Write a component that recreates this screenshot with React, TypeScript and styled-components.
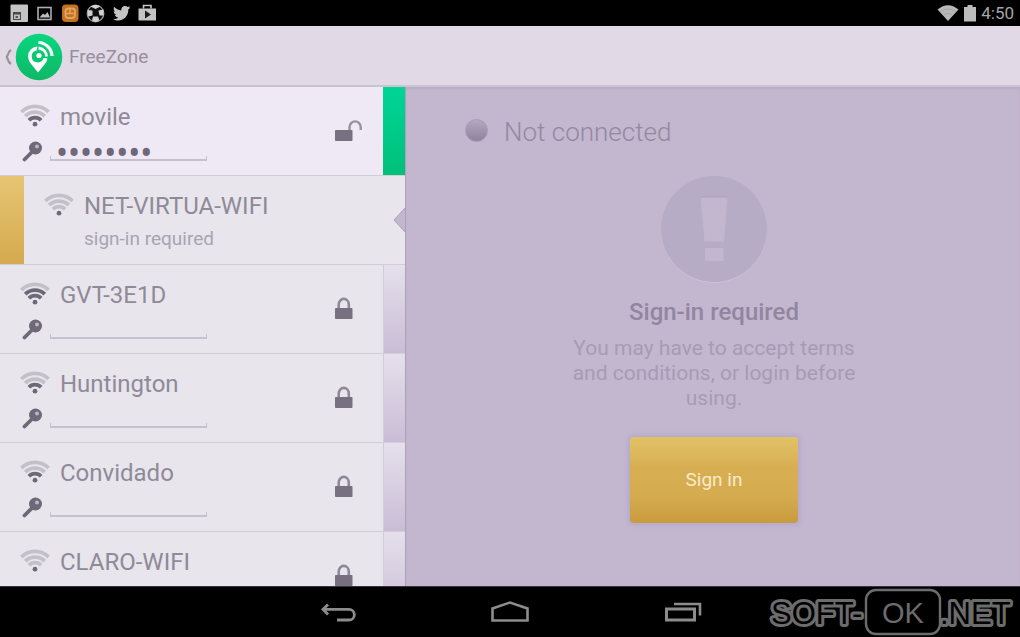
import React from "react";
import styled, { createGlobalStyle } from "styled-components";

const GlobalStyle = createGlobalStyle`
  * { box-sizing: border-box; }
  body {
    margin: 0;
    background: #000;
    font-family: Roboto, "Liberation Sans", sans-serif;
  }
  button { font-family: inherit; padding: 0; border: 0; background: none; cursor: pointer; }
  svg { display: block; flex: none; }
`;

const Screen = styled.div`
  display: flex;
  flex-direction: column;
  height: 100vh;
  overflow: hidden;
`;

const StatusBar = styled.header`
  flex: none;
  display: flex;
  align-items: center;
  justify-content: space-between;
  height: 26px;
  padding: 0 6px 0 8px;
  background: #000;
`;

const StatusGroup = styled.div`
  display: flex;
  align-items: center;
  gap: 5px;
`;

const Clock = styled.time`
  color: #a6a6a6;
  font-size: 17px;
  line-height: 26px;
`;

const AppBar = styled.div`
  flex: none;
  display: flex;
  align-items: center;
  height: 61px;
  padding: 2px 0 0 4px;
  background: #e1d9e6;
  border-bottom: 2px solid #cbc3d1;
`;

const UpButton = styled.button`
  display: flex;
  align-items: center;
  gap: 3px;
`;

const Title = styled.h1`
  margin: 0 0 0 6px;
  color: #96909c;
  font-size: 19px;
  font-weight: 400;
  line-height: 24px;
`;

const Main = styled.main`
  flex: 1;
  min-height: 0;
  display: flex;
  background: #c3b6cf;
`;

const NetworkList = styled.ul`
  flex: 0 0 406px;
  margin: 0;
  padding: 0;
  list-style: none;
  overflow: hidden;
  background: #e8e5ed;
  border-right: 1px solid #aca1b8;
`;

const Row = styled.li<{ $active?: boolean }>`
  position: relative;
  display: flex;
  height: 89px;
  background: ${(p) => (p.$active ? "#efe9f5" : "#e8e5ed")};
  border-bottom: 1px solid #d3cdda;
`;

const stripFill = {
  green: "linear-gradient(#00d596, #00c07a)",
  amber: "linear-gradient(#e6c572, #d5aa50)",
  lilac: "linear-gradient(#e5e0ec, #cabcd6)",
};

const Strip = styled.div<{ $tone: keyof typeof stripFill }>`
  flex: none;
  width: ${(p) => (p.$tone === "amber" ? 24 : 22)}px;
  background: ${(p) => stripFill[p.$tone]};
  border-left: ${(p) => (p.$tone === "lilac" ? "1px solid #d3cdda" : "0")};
`;

const RowBody = styled.div`
  flex: 1;
  min-width: 0;
  display: flex;
  flex-direction: column;
  gap: 7px;
  padding: 16px 0 0 20px;
`;

const NameLine = styled.div`
  display: flex;
  align-items: flex-start;
  gap: 10px;
  height: 28px;
`;

const NetworkName = styled.span`
  color: #8f8a97;
  font-size: 24px;
  line-height: 28px;
`;

const KeyLabel = styled.label`
  display: flex;
  align-items: center;
  gap: 6px;
  height: 26px;
  padding-left: 2px;
`;

const KeyInput = styled.input`
  width: 157px;
  height: 20px;
  padding: 0 6px;
  border: 0;
  outline: 0;
  color: #6f6879;
  background:
    linear-gradient(#c6c1cd, #c6c1cd) left bottom / 1px 5px no-repeat,
    linear-gradient(#c6c1cd, #c6c1cd) right bottom / 1px 5px no-repeat,
    linear-gradient(#c6c1cd, #c6c1cd) left bottom / 100% 2px no-repeat;
  font-family: "Noto Sans", sans-serif;
  font-size: 32px;
  line-height: 20px;
`;

const Note = styled.span`
  padding-left: 40px;
  color: #a9a4b0;
  font-size: 19px;
  line-height: 24px;
`;

const LockSlot = styled.div`
  flex: none;
  display: flex;
  width: 49px;
  padding-top: 32px;
`;

const Notch = styled.svg`
  position: absolute;
  right: -1px;
  top: 31px;
`;

const Detail = styled.section`
  flex: 1;
  min-width: 0;
  display: flex;
  flex-direction: column;
  align-items: center;
  padding: 28px 0 0 2px;
  box-shadow: inset 0 3px 3px -1px #b8abc5;
`;

const Connection = styled.div`
  align-self: stretch;
  display: flex;
  align-items: center;
  gap: 16px;
  padding-left: 57px;
  color: #93889f;
  font-size: 26px;
  font-weight: 300;
  line-height: 34px;
`;

const Dot = styled.span`
  width: 23px;
  height: 23px;
  margin-top: -4px;
  border-radius: 50%;
  background: linear-gradient(#b3a8c2, #8e829d);
  border: 1px solid #a89db5;
`;

const Alert = styled.div`
  margin-top: 26px;
`;

const Heading = styled.h2`
  margin: 14px 0 0;
  color: #9086a0;
  font-size: 24px;
  font-weight: 500;
  line-height: 30px;
`;

const Message = styled.p`
  width: 300px;
  margin: 9px 0 0;
  color: #a79bb3;
  font-size: 21px;
  line-height: 25px;
  text-align: center;
`;

const SignIn = styled.button`
  width: 168px;
  height: 86px;
  margin-top: 26px;
  border-radius: 4px;
  color: #f7ebcb;
  background: linear-gradient(#e2c267, #d7af52 35%, #d5ab50 70%, #c99a3e);
  box-shadow: 0 0 4px 2px #b3a8cb;
  font-size: 19px;
  line-height: 24px;
`;

const NavBar = styled.nav`
  position: relative;
  flex: none;
  display: flex;
  align-items: center;
  justify-content: center;
  gap: 134px;
  height: 51px;
  background: #000;
  border-top: 1px solid #37333b;
`;

const NavButton = styled.button`
  display: block;
`;

const Watermark = styled.svg`
  position: absolute;
  right: 6px;
  bottom: 0;
  font-family: "Liberation Sans", Arial, sans-serif;
`;

function WifiIcon({ level }: { level: number }) {
  const arcs = [
    "M8.9 16.2 A8.5 8.5 0 0 1 21.1 16.2",
    "M5.2 12.2 A14 14 0 0 1 24.8 12.2",
    "M1.4 8 A19.5 19.5 0 0 1 28.6 8",
  ];
  return (
    <svg width="30" height="24" viewBox="0 -1 30 24" aria-hidden="true">
      {arcs.map((d, i) => (
        <path key={d} d={d} fill="none" strokeWidth="3.8" stroke={i < level ? "#6f6879" : "#c4c0c9"} />
      ))}
      <circle cx="15" cy="20.2" r="2.4" fill="#6f6879" />
    </svg>
  );
}

function KeyIcon() {
  return (
    <svg width="22" height="22" viewBox="0 0 22 22" aria-hidden="true">
      <path d="M2.5 19.5 L12 10" stroke="#6f6879" strokeWidth="3.8" strokeLinecap="round" />
      <circle cx="13.5" cy="8" r="6.5" fill="#6f6879" />
      <circle cx="15" cy="6.4" r="2" fill="#bbb5c4" />
    </svg>
  );
}

function LockIcon({ open }: { open?: boolean }) {
  return (
    <svg width="28" height="24" viewBox="0 0 28 24" aria-hidden="true">
      {open ? (
        <path d="M15.5 11 V8 A5.6 5.6 0 0 1 26.7 8 V11" fill="none" stroke="#98929f" strokeWidth="2.4" />
      ) : (
        <path d="M4.7 12 V7.5 A5.05 5.6 0 0 1 14.8 7.5 V12" fill="none" stroke="#8f8997" strokeWidth="2.6" />
      )}
      <rect x="1" y="11" width="17.5" height="11" rx="0.8" fill="#777080" />
    </svg>
  );
}

type Network = { name: string; level: number; secret?: string; open?: boolean; note?: string };

const networks: Network[] = [
  { name: "movile", level: 1, secret: "password", open: true },
  { name: "NET-VIRTUA-WIFI", level: 0, note: "sign-in required" },
  { name: "GVT-3E1D", level: 2 },
  { name: "Huntington", level: 1 },
  { name: "Convidado", level: 1 },
  { name: "CLARO-WIFI", level: 0 },
];

function NetworkRow({ network }: { network: Network }) {
  const { name, level, secret, open, note } = network;
  return (
    <Row $active={open}>
      {note && <Strip $tone="amber" />}
      <RowBody>
        <NameLine>
          <WifiIcon level={level} />
          <NetworkName>{name}</NetworkName>
        </NameLine>
        {note ? (
          <Note>{note}</Note>
        ) : (
          <KeyLabel>
            <KeyIcon />
            <KeyInput type="password" aria-label={`Password for ${name}`} defaultValue={secret ?? ""} />
          </KeyLabel>
        )}
      </RowBody>
      {note ? (
        <Notch width="13" height="26" viewBox="0 0 13 26" aria-hidden="true">
          <path d="M13 0 L1 13 L13 26 Z" fill="#c3b6cf" />
          <path d="M12.5 0.5 L1 13 L12.5 25.5" fill="none" stroke="#aca1b8" />
        </Notch>
      ) : (
        <>
          <LockSlot>
            <LockIcon open={open} />
          </LockSlot>
          <Strip $tone={open ? "green" : "lilac"} />
        </>
      )}
    </Row>
  );
}

function NotificationIcons() {
  return (
    <svg width="150" height="22" viewBox="8 2 150 22" role="img" aria-label="Notifications">
      <rect x="10.5" y="4.5" width="17.5" height="17.5" rx="1" fill="#c4c4c4" />
      <path d="M13 12 H21 V20 H13 Z" fill="#4a4a4a" />
      <path d="M14 14.5 H20 V19 H14 Z" fill="#bdbdbd" />
      <path d="M15.5 16 H18 V18 H15.5 Z" fill="#555" />
      <rect x="38" y="7.5" width="13" height="12" fill="none" stroke="#adadad" strokeWidth="1.6" />
      <path d="M39.5 17.5 L43 13.5 L45 15 L47.5 12 L50 17.5 Z" fill="#bdbdbd" />
      <rect x="62" y="4.5" width="16.5" height="17.5" rx="4" fill="#c4701c" />
      <rect x="65.5" y="8.5" width="9.5" height="9.5" rx="3" fill="none" stroke="#dfa468" strokeWidth="1.8" />
      <path d="M66 13.5 H74 M70 9 V13" stroke="#dfa468" strokeWidth="1.6" fill="none" />
      <circle cx="95.5" cy="13.5" r="8.3" fill="#101010" stroke="#9a9a9a" strokeWidth="1.3" />
      <path d="M90.5 6.5 L95.5 9 L100.5 6.5 L97 5 H94 Z M98.5 10.5 L103.5 9.5 L103.5 15.5 L99.5 15.5 Z M87.5 10 L92.5 10.5 L92.5 15.5 L88 16.5 Z M93 16.5 L98 16.5 L99.5 20.5 L95.5 22 L92 20.5 Z" fill="#d0d0d0" />
      <path d="M130.5 7.5 l-2.2 2.1 c.2 6-4 10.9-9.9 10.9 -2 0-3.7-.5-5.2-1.5 2 .1 3.7-.4 5-1.5 -1.7-.1-2.8-1.1-3.3-2.5 h1.5 c-1.7-.6-2.7-1.9-2.7-3.7 l1.5.4 c-1.5-1.3-1.9-3.2-1-5 1.9 2.2 4.2 3.5 7.2 3.7 -.5-2.5 1.3-4.5 3.6-4.5 1.1 0 2 .4 2.7 1.2 l2.3-.9 -1 1.8 z" fill="#c4c4c4" />
      <path d="M138.5 8.5 H156 V20.5 H138.5 Z" fill="#c4c4c4" />
      <path d="M143.5 8.5 V5.5 H151 V8.5" fill="none" stroke="#c4c4c4" strokeWidth="1.6" />
      <path d="M145 10.5 L151 14.5 L145 18.5 Z" fill="#1c1c1c" />
    </svg>
  );
}

export default function App() {
  return (
    <>
      <GlobalStyle />
      <Screen>
        <StatusBar>
          <StatusGroup>
            <NotificationIcons />
          </StatusGroup>
          <StatusGroup>
            <svg width="22" height="18" viewBox="0 0 22 18" aria-hidden="true">
              <path d="M0.5 5.5 Q11 -3 21.5 5.5 L11 17 Z" fill="#b8b8b8" />
              <path d="M3 8 Q11 2 19 8 M6 11.5 Q11 7.5 16 11.5" fill="none" stroke="#a4a4a4" />
            </svg>
            <svg width="12" height="18" viewBox="0 0 12 18" aria-hidden="true">
              <path d="M3.5 1 H8.5 V3 H12 V17.5 H0 V3 H3.5 Z" fill="#bcbcbc" />
            </svg>
            <Clock>4:50</Clock>
          </StatusGroup>
        </StatusBar>

        <AppBar>
          <UpButton aria-label="Navigate up">
            <svg width="8" height="18" viewBox="0 0 8 18" aria-hidden="true">
              <path d="M7 2 Q4.5 3.500 3.500 7.500 L2.800 9 L3.500 10.500 Q4.500 14.500 7 16" fill="none" stroke="#97919d" strokeWidth="2.2" />
            </svg>
            <svg width="48" height="48" viewBox="0 0 48 48" aria-hidden="true">
              <defs>
                <linearGradient id="badge" x1="0" y1="0" x2="0" y2="1">
                  <stop offset="0" stopColor="#08d680" />
                  <stop offset="1" stopColor="#0fb865" />
                </linearGradient>
              </defs>
              <circle cx="24" cy="24" r="23.3" fill="url(#badge)" />
              <path d="M22.5 13.5 A10 10 0 0 0 13 23.5 Q13 27.5 16.5 31.5 L23 39.5 L29.5 31.5 Q32 28.5 32.5 25.5 L28.5 25 A6 6 0 1 1 21.5 17.5 Z" fill="#fff" />
              <circle cx="24" cy="22.5" r="2.6" fill="#fff" />
              <path d="M23.5 15 A8.5 8.5 0 0 1 31.5 23.5" fill="none" stroke="#fff" strokeWidth="2.8" />
              <path d="M23.5 9.5 A14 14 0 0 1 37 23" fill="none" stroke="#fff" strokeWidth="3.2" />
            </svg>
          </UpButton>
          <Title>FreeZone</Title>
        </AppBar>

        <Main>
          <NetworkList aria-label="Wi-Fi networks">
            {networks.map((n) => (
              <NetworkRow key={n.name} network={n} />
            ))}
          </NetworkList>

          <Detail>
            <Connection>
              <Dot />
              <span>Not connected</span>
            </Connection>
            <Alert>
              <svg width="108" height="108" viewBox="0 0 108 108" aria-hidden="true">
                <circle cx="54" cy="55" r="53" fill="#ccc1d7" />
                <circle cx="54" cy="54" r="53" fill="#b7acc6" />
                <path d="M40.5 22 H67.5 L64 66.5 H44.5 Z M45 73 H63.5 V86 H45 Z" fill="#c3b6cf" />
                <path d="M40.5 22 H67.5" stroke="#aca1bc" />
              </svg>
            </Alert>
            <Heading>Sign-in required</Heading>
            <Message>You may have to accept terms and conditions, or login before using.</Message>
            <SignIn>Sign in</SignIn>
          </Detail>
        </Main>

        <NavBar>
          <NavButton aria-label="Back">
            <svg width="38" height="24" viewBox="0 0 38 24" aria-hidden="true">
              <path d="M10 4.5 L5 9.3 L10 14.5 M5.5 9.3 H31 A5 5 0 0 1 31 20 H19" fill="none" stroke="#8c8c8c" strokeWidth="2.8" />
            </svg>
          </NavButton>
          <NavButton aria-label="Home">
            <svg width="40" height="24" viewBox="0 0 40 24" aria-hidden="true">
              <path d="M2.5 20.5 V8.5 L20 2.5 L37.5 8.5 V20.5 Z" fill="none" stroke="#8c8c8c" strokeWidth="2.6" />
            </svg>
          </NavButton>
          <NavButton aria-label="Recent apps">
            <svg width="38" height="24" viewBox="0 0 38 24" aria-hidden="true">
              <path d="M2.5 9 H30.5 V20 H2.5 Z" fill="none" stroke="#8c8c8c" strokeWidth="3" />
              <path d="M10 4 H36 V15.5" fill="none" stroke="#8c8c8c" strokeWidth="2.6" />
            </svg>
          </NavButton>
          <Watermark width="248" height="50" viewBox="0 0 248 50" role="img" aria-label="SOFT-OK.NET">
            <g fontSize="31" fill="#000" stroke="#6c6c6c" strokeWidth="6" strokeLinejoin="round" paintOrder="stroke">
              <text x="5" y="37">SOFT-</text>
              <text x="174" y="37">.NET</text>
            </g>
            <rect x="100" y="3" width="74" height="44" rx="10" fill="#000" stroke="#6c6c6c" strokeWidth="2.4" />
            <text x="137" y="36" fontSize="29" fill="#6c6c6c" textAnchor="middle">OK</text>
          </Watermark>
        </NavBar>
      </Screen>
    </>
  );
}
